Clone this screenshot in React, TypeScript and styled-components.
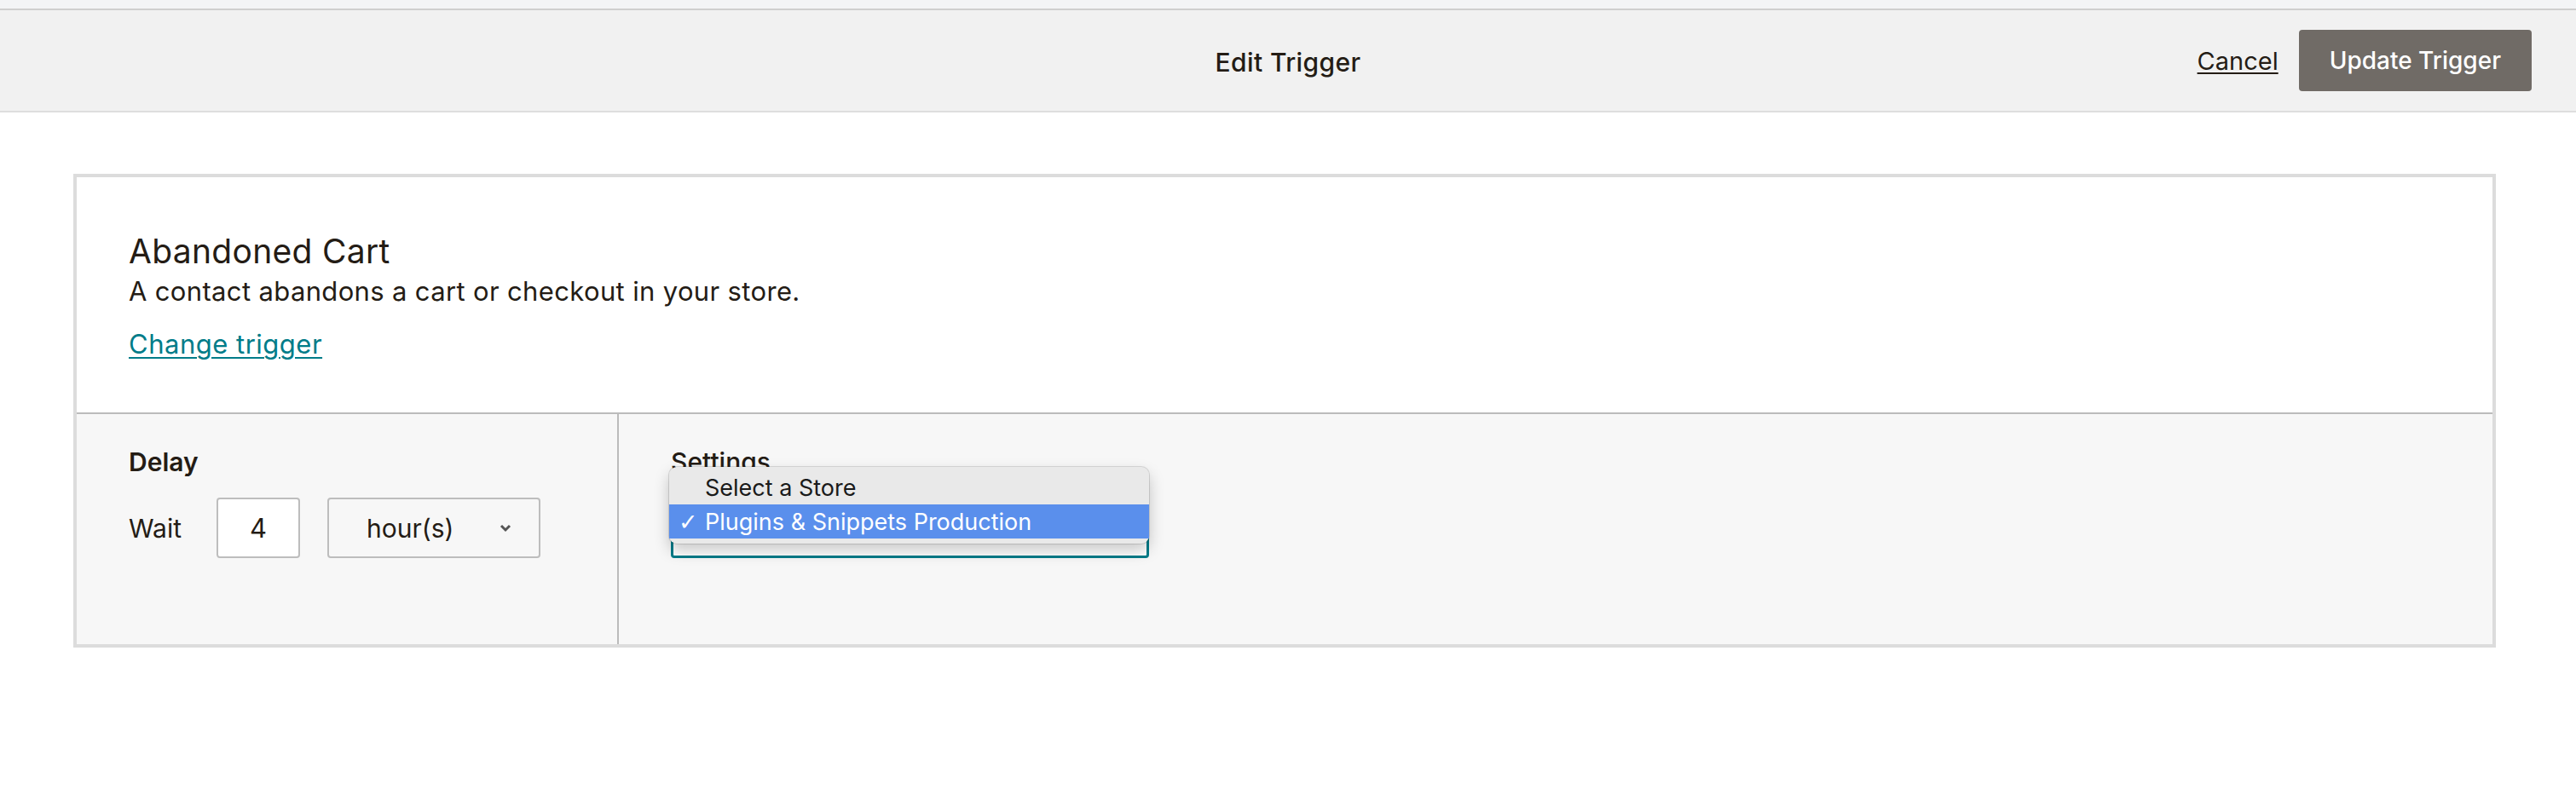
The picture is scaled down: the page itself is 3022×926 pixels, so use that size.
import React from 'react';
import styled, { createGlobalStyle } from 'styled-components';

const GlobalStyle = createGlobalStyle`
  body {
    margin: 0;
    background: #ffffff;
    font-family: Inter, 'Liberation Sans', sans-serif;
    color: #241c15;
  }
`;

const TopStrip = styled.div`
  height: 10px;
  background: #f3f4f6;
  border-bottom: 2px solid #cfcfcf;
`;

const Header = styled.header`
  display: grid;
  grid-template-columns: 1fr auto 1fr;
  align-items: center;
  height: 118px;
  background: #f1f1f1;
  border-bottom: 2px solid #dedede;
`;

const Title = styled.h1`
  grid-column: 2;
  margin: 0;
  padding-top: 4px;
  font-size: 30px;
  font-weight: 500;
  letter-spacing: 0.4px;
  color: #241c15;
`;

const Actions = styled.div`
  grid-column: 3;
  display: flex;
  justify-content: flex-end;
  align-items: center;
  gap: 24px;
  padding-right: 52px;
`;

const CancelLink = styled.a`
  font-size: 29px;
  color: #241c15;
  text-decoration: underline;
  text-underline-offset: 3px;
  text-decoration-thickness: 2px;
`;

const PrimaryButton = styled.button`
  height: 72px;
  padding: 0 36px;
  border: none;
  border-radius: 4px;
  background: #706b66;
  color: #ffffff;
  font-family: inherit;
  font-size: 28px;
  font-weight: 500;
`;

const Main = styled.main`
  padding: 72px 94px 0 86px;
`;

const Card = styled.section`
  border: 4px solid #dcdcdc;
`;

const TriggerInfo = styled.div`
  height: 278px;
  box-sizing: border-box;
  padding: 62px 61px 0;
  background: #ffffff;
  border-bottom: 2px solid #bbbbbb;
`;

const TriggerName = styled.h2`
  margin: 0;
  font-size: 39px;
  font-weight: 400;
  line-height: 50px;
  letter-spacing: 0.3px;
`;

const TriggerDesc = styled.p`
  margin: 0;
  font-size: 31px;
  line-height: 44px;
  letter-spacing: 0.35px;
`;

const ChangeLink = styled.a`
  display: inline-block;
  margin-top: 21px;
  font-size: 31px;
  letter-spacing: 0.5px;
  color: #007c89;
  text-decoration: underline;
  text-underline-offset: 4px;
  text-decoration-thickness: 2px;
`;

const Options = styled.div`
  display: grid;
  grid-template-columns: 636px 1fr;
  height: 270px;
  background: #f7f7f7;
`;

const Column = styled.div<{ $divider?: boolean }>`
  padding: 34px 61px 0;
  border-right: ${p => (p.$divider ? '2px solid #bbbbbb' : 'none')};
`;

const Label = styled.div<{ $bold?: boolean }>`
  font-size: 30px;
  line-height: 45px;
  font-weight: ${p => (p.$bold ? 600 : 500)};
  margin-bottom: 19px;
`;

const Row = styled.div`
  display: flex;
  align-items: center;
`;

const WaitText = styled.span`
  font-size: 30px;
  margin-right: 41px;
`;

const NumberBox = styled.div`
  width: 98px;
  height: 71px;
  box-sizing: border-box;
  border: 2px solid #bdbdbd;
  border-radius: 4px;
  background: #ffffff;
  display: flex;
  align-items: center;
  justify-content: center;
  font-size: 31px;
  margin-right: 32px;
`;

const UnitSelect = styled.div`
  width: 250px;
  height: 71px;
  box-sizing: border-box;
  border: 2px solid #bdbdbd;
  border-radius: 4px;
  display: flex;
  align-items: center;
  justify-content: space-between;
  padding: 0 32px 0 44px;
  font-size: 30px;
`;

const StoreField = styled.div`
  position: relative;
  width: 561px;
  height: 71px;
  box-sizing: border-box;
  border: 3px solid #007c89;
  border-radius: 4px;
  background: #ffffff;
`;

const Popup = styled.ul`
  position: absolute;
  top: -39px;
  left: -5px;
  width: 563px;
  margin: 0;
  padding: 4px 0 6px;
  list-style: none;
  background: #e9e9e9;
  border-radius: 9px;
  box-shadow: 0 0 0 1px rgba(0, 0, 0, 0.12), 0 8px 18px rgba(0, 0, 0, 0.22);
  font-size: 27px;
`;

const PopupItem = styled.li<{ $active?: boolean }>`
  display: flex;
  align-items: center;
  height: 40px;
  padding-left: 42px;
  position: relative;
  color: ${p => (p.$active ? '#ffffff' : '#1a1a1a')};
  background: ${p => (p.$active ? '#5a8fec' : 'transparent')};
`;

const Check = styled.span`
  position: absolute;
  left: 11px;
  font-family: 'DejaVu Sans', sans-serif;
  font-size: 27px;
  font-weight: bold;
`;

const Chevron = () => (
  <svg width="14" height="10" viewBox="0 0 14 10">
    <path d="M2 2 L7 7 L12 2" fill="none" stroke="#555" strokeWidth="3" />
  </svg>
);

export default function App() {
  return (
    <>
      <GlobalStyle />
      <TopStrip />
      <Header>
        <Title>Edit Trigger</Title>
        <Actions>
          <CancelLink>Cancel</CancelLink>
          <PrimaryButton>Update Trigger</PrimaryButton>
        </Actions>
      </Header>
      <Main>
        <Card>
          <TriggerInfo>
            <TriggerName>Abandoned Cart</TriggerName>
            <TriggerDesc>A contact abandons a cart or checkout in your store.</TriggerDesc>
            <ChangeLink>Change trigger</ChangeLink>
          </TriggerInfo>
          <Options>
            <Column $divider>
              <Label $bold>Delay</Label>
              <Row>
                <WaitText>Wait</WaitText>
                <NumberBox>4</NumberBox>
                <UnitSelect>
                  <span>hour(s)</span>
                  <Chevron />
                </UnitSelect>
              </Row>
            </Column>
            <Column>
              <Label>Settings</Label>
              <StoreField>
                <Popup>
                  <PopupItem>Select a Store</PopupItem>
                  <PopupItem $active>
                    <Check>✓</Check>
                    Plugins &amp; Snippets Production
                  </PopupItem>
                </Popup>
              </StoreField>
            </Column>
          </Options>
        </Card>
      </Main>
    </>
  );
}
